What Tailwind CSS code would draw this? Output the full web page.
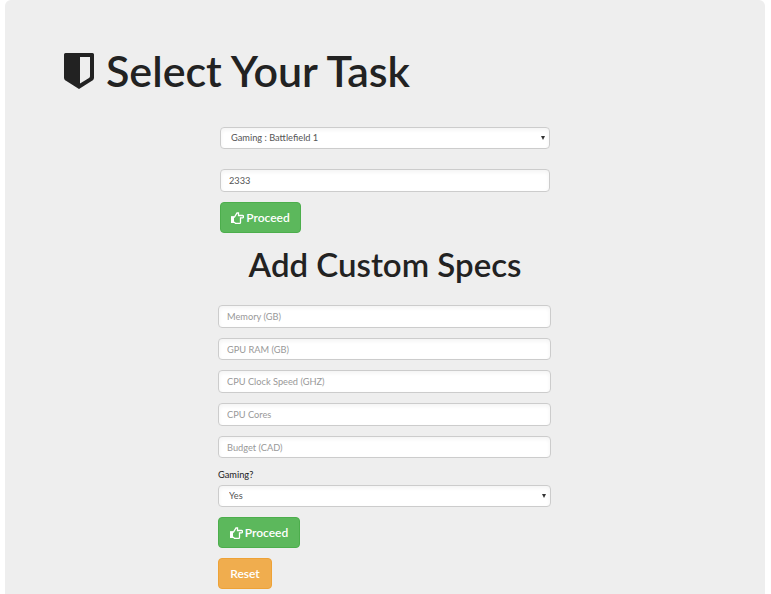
<!DOCTYPE html>
<html lang="en">
  <head>
    <meta charset="UTF-8" />
    <meta name="viewport" content="width=device-width, initial-scale=1.0" />
    <title>Select Your Task</title>
    <script src="https://cdn.jsdelivr.net/npm/@tailwindcss/browser@4"></script>
  </head>
  <body class="bg-white font-['Lato',sans-serif] text-[#222] overflow-hidden h-[594px]">
    <div class="ml-[5px] w-[760px] h-[594px] bg-[#eeeeee] rounded-t-md overflow-hidden">
      <h1 class="flex items-center gap-[12px] ml-[59px] pt-[46px] h-[127px] pb-[31px] text-[43px] leading-[50px] font-semibold">
        <svg class="w-[30px] h-[36px] shrink-0" viewBox="0 0 30 36">
          <path fill="#222" fill-rule="evenodd" d="M1.500 0H28.500A1.500 1.500 0 0 1 30 1.500V24.500C30 26 29.300 27 28 27.800L15 36L2 27.800C.7 27 0 26 0 24.500V1.500A1.500 1.500 0 0 1 1.500 0ZM16 4V30.500L25 25C25.700 24.500 26 24 26 23.200V4Z" />
        </svg>
        <span>Select Your Task</span>
      </h1>

      <div class="ml-[215px] w-[330px] flex flex-col">
        <div class="relative h-[22px]">
          <select class="block appearance-none w-full h-[22px] px-[10px] pb-[1px] text-[9.250px] text-[#555] bg-white border border-[#ccc] rounded shadow-inner">
            <option>Gaming : Battlefield 1</option>
          </select>
          <span class="absolute right-[5px] top-[9px] border-x-[2.500px] border-x-transparent border-t-[4px] border-t-[#333]"></span>
        </div>
        <input value="2333" class="mt-[20px] h-[23px] px-[8px] text-[9.250px] text-[#555] bg-white border border-[#ccc] rounded shadow-inner" />
        <button class="mt-[10px] w-[81px] h-[31px] pt-[1px] flex items-center justify-center gap-[2px] text-[12px] font-semibold text-white bg-[#5cb85c] border border-[#4cae4c] rounded">
          <svg class="w-[13px] h-[12px]" viewBox="0 0 13 12" fill="none" stroke="white" stroke-width="1.300">
            <path d="M.7 5H3.500L6 1H7.500L7.500 3.500H11.500C12.800 3.500 12.800 5.800 11.500 5.800H9.500V10.500C9.500 11.200 9 11.400 8.500 11.400H4.500L3.500 10.400H.7Z" />
            <path fill="white" stroke="none" d="M0 4.500H3V11H0Z" />
          </svg>
          Proceed
        </button>
      </div>

      <h2 class="mt-[11px] mb-[21px] text-center text-[33px] leading-[40px] font-semibold">Add Custom Specs</h2>

      <form class="ml-[213px] w-[333px] flex flex-col">
        <div class="flex flex-col gap-[10px]">
          <input placeholder="Memory (GB)" class="h-[23px] px-[8px] text-[9.250px] bg-white border border-[#ccc] rounded placeholder:text-[#999] shadow-inner" />
          <input placeholder="GPU RAM (GB)" class="h-[22px] px-[8px] text-[9.250px] bg-white border border-[#ccc] rounded placeholder:text-[#999] shadow-inner" />
          <input placeholder="CPU Clock Speed (GHZ)" class="h-[23px] px-[8px] text-[9.250px] bg-white border border-[#ccc] rounded placeholder:text-[#999] shadow-inner" />
          <input placeholder="CPU Cores" class="h-[23px] px-[8px] text-[9.250px] bg-white border border-[#ccc] rounded placeholder:text-[#999] shadow-inner" />
          <input placeholder="Budget (CAD)" class="h-[22px] px-[8px] text-[9.250px] bg-white border border-[#ccc] rounded placeholder:text-[#999] shadow-inner" />
        </div>
        <label class="mt-[9px] h-[18px] text-[9.250px] leading-[16px]">Gaming?</label>
        <div class="relative h-[22px]">
          <select class="block appearance-none w-full h-[22px] px-[10px] pb-[1px] text-[9.250px] text-[#555] bg-white border border-[#ccc] rounded shadow-inner">
            <option>Yes</option>
          </select>
          <span class="absolute right-[5px] top-[9px] border-x-[2.500px] border-x-transparent border-t-[4px] border-t-[#333]"></span>
        </div>
        <button type="button" class="mt-[10px] w-[82px] h-[31px] pt-[1px] flex items-center justify-center gap-[2px] text-[12px] font-semibold text-white bg-[#5cb85c] border border-[#4cae4c] rounded">
          <svg class="w-[13px] h-[12px]" viewBox="0 0 13 12" fill="none" stroke="white" stroke-width="1.300">
            <path d="M.7 5H3.500L6 1H7.500L7.500 3.500H11.500C12.800 3.500 12.800 5.800 11.500 5.800H9.500V10.500C9.500 11.200 9 11.400 8.500 11.400H4.500L3.500 10.400H.7Z" />
            <path fill="white" stroke="none" d="M0 4.500H3V11H0Z" />
          </svg>
          Proceed
        </button>
        <button type="button" class="mt-[10px] w-[54px] h-[31px] pt-[1px] text-[12px] font-semibold text-white bg-[#f0ad4e] border border-[#eea236] rounded">Reset</button>
      </form>
    </div>
  </body>
</html>
